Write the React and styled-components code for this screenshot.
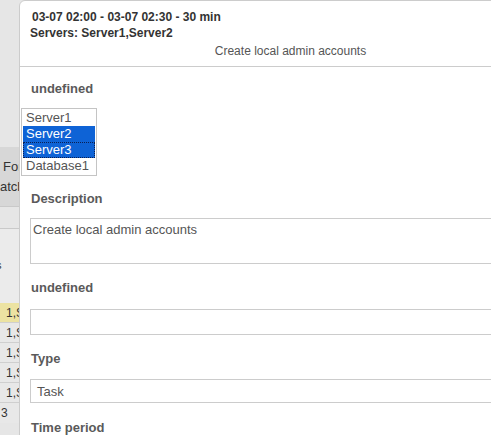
import React from "react";
import styled, { createGlobalStyle } from "styled-components";

const GlobalStyle = createGlobalStyle`
  html, body {
    margin: 0;
    padding: 0;
    background: #e6e6e6;
    overflow: hidden;
    font-family: "Liberation Sans", Arial, sans-serif;
  }
  * { box-sizing: border-box; }
`;

const Page = styled.div`
  display: flex;
  align-items: flex-start;
  width: 491px;
  height: 435px;
  overflow: hidden;
`;

const SideStrip = styled.div`
  flex: 0 0 19px;
  width: 19px;
  display: flex;
  flex-direction: column;
  overflow: hidden;
  color: #333;
  font-size: 13px;
`;

const StripBlock = styled.div`
  height: ${(p) => p.$h}px;
  background: ${(p) => p.$bg || "#e6e6e6"};
  border-bottom: ${(p) => (p.$line ? "1px solid #c9c9c9" : "none")};
  padding-top: ${(p) => p.$pt || 0}px;
  display: flex;
  flex-direction: column;
  overflow: hidden;
`;

const StripText = styled.div`
  height: ${(p) => p.$lh || 20}px;
  line-height: ${(p) => p.$lh || 20}px;
  white-space: nowrap;
  padding-left: ${(p) => p.$indent || 0}px;
  font-size: ${(p) => p.$size || 13}px;
`;

const CutLetter = styled.span`
  display: inline-block;
  margin-left: -4px;
`;

const TableRow = styled.div`
  height: 20px;
  flex: 0 0 20px;
  background: ${(p) => (p.$hl ? "#ece3a2" : "#e8e8e8")};
  border-bottom: 1px solid #cfcfcf;
  display: flex;
  justify-content: flex-end;
  align-items: center;
  overflow: hidden;
  font-size: 12px;
  white-space: nowrap;
  color: #333;
`;

const RowText = styled.span`
  margin-right: -5px;
`;

const LastRow = styled(TableRow)`
  justify-content: flex-start;
  padding-left: 1px;
  border-bottom: none;
`;

const Panel = styled.div`
  flex: 0 0 543px;
  width: 543px;
  height: 470px;
  background: #fff;
  border: 1px solid #cccccc;
  border-top-left-radius: 6px;
`;

const Header = styled.div`
  padding: 8px 10px 7px 10px;
  border-bottom: 1px solid #cccccc;
`;

const HeaderLine = styled.div`
  font-size: 12px;
  line-height: 16px;
  font-weight: bold;
  color: #333;
  padding-left: ${(p) => p.$indent || 0}px;
  white-space: nowrap;
`;

const HeaderTitle = styled.div`
  margin-top: 2px;
  font-size: 12px;
  line-height: 16px;
  color: #555;
  text-align: center;
`;

const Body = styled.div`
  padding: 14px 10px 0 10px;
  display: flex;
  flex-direction: column;
`;

const Field = styled.div`
  display: flex;
  flex-direction: column;
  align-items: flex-start;
  margin-bottom: ${(p) => p.$mb}px;
`;

const Label = styled.div`
  font-size: 13px;
  line-height: 16px;
  font-weight: bold;
  color: #5a5a5a;
  padding-left: 1px;
  margin-bottom: ${(p) => p.$mb}px;
`;

const ListBox = styled.div`
  margin-left: -9px;
  width: 76px;
  height: 68px;
  border: 1px solid #c4c4c4;
  padding: 1px;
  background: #fff;
`;

const Option = styled.div`
  height: 16px;
  line-height: 16px;
  padding-left: 3px;
  font-size: 13px;
  white-space: nowrap;
  color: ${(p) => (p.$selected ? "#fff" : "#555")};
  background: ${(p) => (p.$selected ? "#0e63d6" : "transparent")};
  outline: ${(p) => (p.$focused ? "1px dotted #0a1f52" : "none")};
  outline-offset: -1px;
`;

const TextArea = styled.div`
  width: 100%;
  height: 46px;
  border: 1px solid #cccccc;
  padding: 3px 2px;
  font-size: 13px;
  line-height: 15px;
  color: #555;
  background: #fff;
`;

const TextInput = styled.div`
  width: 100%;
  height: 26px;
  border: 1px solid #cccccc;
  background: #fff;
`;

const SelectBox = styled.div`
  width: 100%;
  height: 24px;
  border: 1px solid #cccccc;
  padding: 0 6px;
  display: flex;
  align-items: center;
  font-size: 13px;
  color: #555;
  background: #fff;
`;

const servers = [
  { name: "Server1", selected: false },
  { name: "Server2", selected: true },
  { name: "Server3", selected: true, focused: true },
  { name: "Database1", selected: false },
];

const rows = [true, false, false, false, false];

export default function App() {
  return (
    <>
      <GlobalStyle />
      <Page>
        <SideStrip>
          <StripBlock $h={147} />
          <StripBlock $h={60} $bg="#d7d7d7" $line $pt={10}>
            <StripText $indent={3}>For</StripText>
            <StripText>atch</StripText>
          </StripBlock>
          <StripBlock $h={22} $line />
          <StripBlock $h={74} $bg="#ebebeb" $pt={28}>
            <StripText $lh={16} $size={11}>
              <CutLetter>s</CutLetter>
            </StripText>
          </StripBlock>
          {rows.map((hl, i) => (
            <TableRow key={i} $hl={hl}>
              <RowText>1,S</RowText>
            </TableRow>
          ))}
          <LastRow>3</LastRow>
        </SideStrip>
        <Panel>
          <Header>
            <HeaderLine $indent={2}>03-07 02:00 - 03-07 02:30 - 30 min</HeaderLine>
            <HeaderLine>Servers: Server1,Server2</HeaderLine>
            <HeaderTitle>Create local admin accounts</HeaderTitle>
          </Header>
          <Body>
            <Field $mb={15}>
              <Label $mb={11}>undefined</Label>
              <ListBox role="listbox" aria-multiselectable="true">
                {servers.map((s) => (
                  <Option
                    key={s.name}
                    role="option"
                    aria-selected={s.selected}
                    $selected={s.selected}
                    $focused={s.focused}
                  >
                    {s.name}
                  </Option>
                ))}
              </ListBox>
            </Field>
            <Field $mb={16}>
              <Label $mb={11}>Description</Label>
              <TextArea>Create local admin accounts</TextArea>
            </Field>
            <Field $mb={16}>
              <Label $mb={13}>undefined</Label>
              <TextInput />
            </Field>
            <Field $mb={17}>
              <Label $mb={12}>Type</Label>
              <SelectBox>Task</SelectBox>
            </Field>
            <Field $mb={0}>
              <Label $mb={0}>Time period</Label>
            </Field>
          </Body>
        </Panel>
      </Page>
    </>
  );
}
